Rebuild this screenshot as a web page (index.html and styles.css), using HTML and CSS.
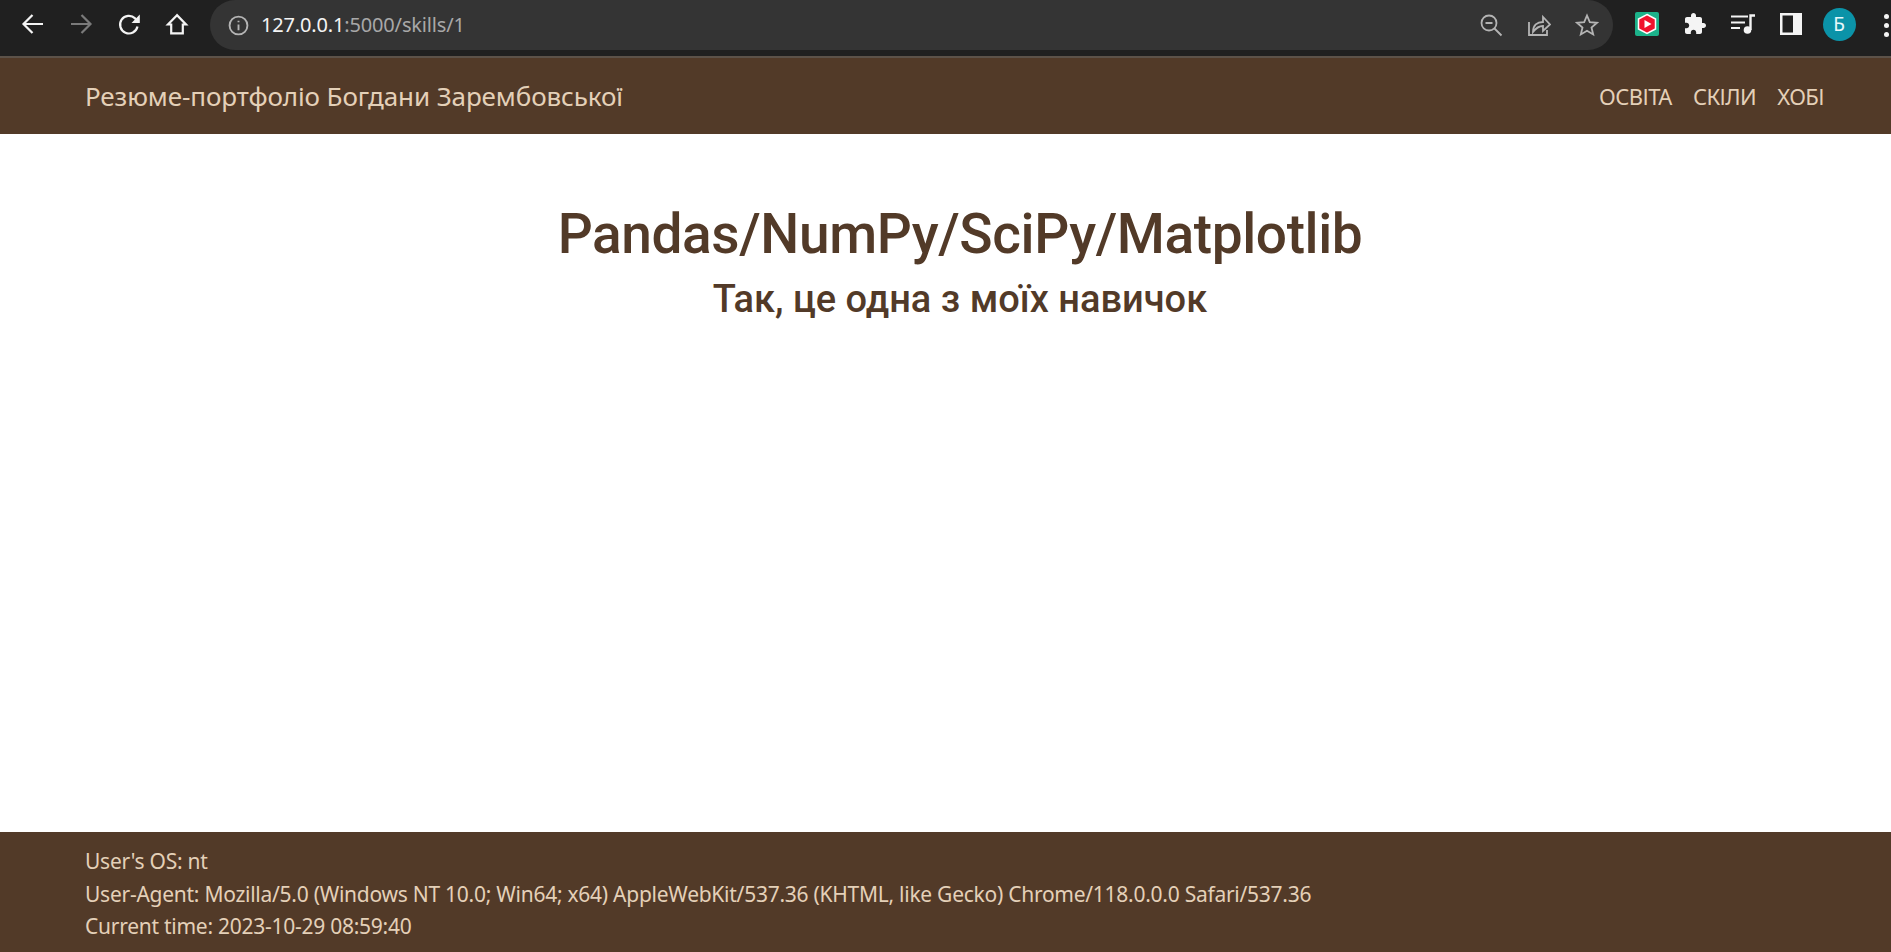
FILE: index.html
```html
<!DOCTYPE html>
<html lang="uk">
<head>
    <meta charset="UTF-8">
    <meta name="viewport" content="width=device-width, initial-scale=1.0">
    <title>Pandas/NumPy/SciPy/Matplotlib</title>
    <link rel="stylesheet" href="styles.css">
</head>
<body>
    <div class="browser-bar">
        <div class="tool-group">
            <span class="tool-btn">
                <svg viewBox="0 0 24 24" class="icon"><path d="M22 12H3M11.500 3 2.500 12l9 9" /></svg>
            </span>
            <span class="tool-btn dim">
                <svg viewBox="0 0 24 24" class="icon"><path d="M2 12H21M12.500 3l9 9-9 9" /></svg>
            </span>
            <span class="tool-btn">
                <svg viewBox="0 0 24 24" class="icon"><path d="M20.500 14.500a8.800 8.800 0 1 1-2.400-8.100L21 9.500" /><path class="solid" d="M22.800 2.500V11H14.500z" /></svg>
            </span>
            <span class="tool-btn">
                <svg viewBox="0 0 24 24" class="icon"><path d="M12 3.200 3 12.500H6.200v8.800h11.600v-8.800H21z" /></svg>
            </span>
        </div>

        <div class="omnibox">
            <svg viewBox="0 0 20 20" class="info-icon">
                <circle cx="10" cy="10" r="8.500" />
                <path d="M10 9v5.500M10 5.500v1.500" />
            </svg>
            <span class="url"><b>127.0.0.1</b>:5000/skills/1</span>
            <span class="omni-actions">
                <svg viewBox="0 0 24 24" class="omni-icon"><circle cx="10" cy="10" r="7.500" /><path d="M6.500 10h7M15.500 15.500l7 7" /></svg>
                <svg viewBox="0 0 24 24" class="omni-icon"><path d="M2 9v13h18v-5" /><path d="M6 19c0-7 4-10 10-10V4l7 7.500L16 18v-5c-4 0-7 2-10 6z" /></svg>
                <svg viewBox="0 0 24 24" class="omni-icon"><path d="M12 2.500l2.800 6.700 7.200.6-5.500 4.700 1.700 7-6.200-3.700-6.200 3.700 1.700-7L2 9.800l7.200-.6z" /></svg>
            </span>
        </div>

        <div class="tool-group ext-group">
            <span class="tool-btn">
                <svg viewBox="0 0 24 24" class="ext-icon">
                    <rect width="24" height="24" rx="2" fill="#1cb28a" />
                    <path d="M12 2.500 20.500 7v10L12 21.500 3.500 17V7z" fill="#f0122d" stroke="#fff" stroke-width="1.500" />
                    <path d="M9.500 8 16.500 12 9.500 16z" fill="#fff" />
                </svg>
            </span>
            <span class="tool-btn">
                <svg viewBox="0 0 24 24" class="ext-icon"><path fill="#f4f4f4" d="M20.500 11H19V7c0-1.100-.9-2-2-2h-4V3.500C13 2.120 11.880 1 10.500 1S8 2.120 8 3.500V5H4c-1.100 0-1.990.9-1.990 2v3.800H3.500c1.490 0 2.700 1.210 2.700 2.700s-1.210 2.700-2.700 2.700H2V20c0 1.100.9 2 2 2h3.800v-1.500c0-1.490 1.210-2.700 2.700-2.700 1.490 0 2.700 1.210 2.700 2.700V22H17c1.100 0 2-.9 2-2v-4h1.500c1.380 0 2.500-1.120 2.500-2.500S21.880 11 20.500 11z" /></svg>
            </span>
            <span class="tool-btn">
                <svg viewBox="0 0 24 24" class="ext-icon">
                    <path d="M0 4.500h17M0 10.500h14M0 16h9" stroke="#f4f4f4" stroke-width="2" />
                    <path d="M19.500 18V3.500H24" stroke="#f4f4f4" stroke-width="2.400" fill="none" />
                    <circle cx="16.500" cy="18" r="3.800" fill="#f4f4f4" />
                </svg>
            </span>
            <span class="tool-btn">
                <svg viewBox="0 0 24 24" class="ext-icon">
                    <path fill="#f4f4f4" fill-rule="evenodd" d="M1 1h22v22H1zM3.500 3.500v17H14v-17z" />
                </svg>
            </span>
            <span class="tool-btn"><span class="avatar">Б</span></span>
            <span class="menu-dots"><i></i><i></i><i></i></span>
        </div>
    </div>

    <nav class="navbar">
        <a class="brand" href="#">Резюме-портфоліо Богдани Зарембовської</a>
        <div class="nav-links">
            <a href="#">ОСВІТА</a>
            <a href="#">СКІЛИ</a>
            <a href="#">ХОБІ</a>
        </div>
    </nav>

    <main class="content">
        <h1>Pandas/NumPy/SciPy/Matplotlib</h1>
        <h2>Так, це одна з моїх навичок</h2>
    </main>

    <footer class="footer">
        <div>User's OS: nt</div>
        <div>User-Agent: Mozilla/5.0 (Windows NT 10.0; Win64; x64) AppleWebKit/537.36 (KHTML, like Gecko) Chrome/118.0.0.0 Safari/537.36</div>
        <div>Current time: 2023-10-29 08:59:40</div>
    </footer>
</body>
</html>
```

FILE: styles.css
```css
html, body {
    height: 100%;
}

body {
    margin: 0;
    display: flex;
    flex-direction: column;
    background-color: #fff;
    color: #523a28;
    font-family: "Noto Sans", "Open Sans", sans-serif;
    overflow: hidden;
}

/* browser toolbar */
.browser-bar {
    display: flex;
    align-items: flex-start;
    height: 56px;
    flex: none;
    background-color: #202020;
    border-bottom: 2px solid #5c5249;
}

.tool-group {
    display: flex;
    gap: 8px;
    padding: 4px 0 0 13px;
}

.tool-btn {
    width: 40px;
    height: 40px;
    display: flex;
    align-items: center;
    justify-content: center;
}

.icon {
    width: 24px;
    height: 24px;
    fill: none;
    stroke: #f4f4f4;
    stroke-width: 2.200;
}

.icon .solid {
    fill: #f4f4f4;
    stroke: none;
}

.dim .icon {
    stroke: #7a7a7a;
}

.omnibox {
    flex: 1;
    height: 50px;
    margin-left: 13px;
    padding: 0 14px 0 18px;
    display: flex;
    align-items: center;
    background-color: #343434;
    border-radius: 25px;
}

.info-icon {
    width: 21px;
    height: 21px;
    fill: none;
    stroke: #b4b4b4;
    stroke-width: 1.800;
    flex: none;
}

.url {
    margin: 0 0 2px 12px;
    font-size: 20px;
    letter-spacing: -0.16px;
    color: #a8a8a8;
}

.url b {
    font-weight: 400;
    color: #f4f4f4;
}

.omni-actions {
    margin-left: auto;
    display: flex;
    gap: 24px;
}

.omni-icon {
    width: 24px;
    height: 24px;
    fill: none;
    stroke: #b4b4b4;
    stroke-width: 1.800;
}

.ext-group {
    padding-left: 14px;
}

.ext-icon {
    width: 24px;
    height: 24px;
}

.avatar {
    width: 33px;
    height: 33px;
    border-radius: 50%;
    background-color: #0b93a8;
    color: #e8f8fb;
    font-size: 19px;
    display: flex;
    align-items: center;
    justify-content: center;
}

.menu-dots {
    width: 24px;
    box-sizing: border-box;
    display: flex;
    flex-direction: column;
    gap: 4px;
    padding: 10px 0 0 17px;
}

.menu-dots i {
    width: 5px;
    height: 5px;
    border-radius: 50%;
    background-color: #f4f4f4;
}

/* site navbar */
.navbar {
    height: 76px;
    flex: none;
    display: flex;
    align-items: center;
    justify-content: space-between;
    padding: 0 67px 0 85px;
    background-color: #523a28;
}

.navbar a {
    color: #e4d0b8;
    text-decoration: none;
}

.brand {
    font-size: 26px;
    letter-spacing: -0.1px;
}

.nav-links {
    display: flex;
    gap: 21px;
    font-size: 22px;
    letter-spacing: -0.55px;
}

/* page body */
.content {
    flex: 1;
    padding: 67px 0 0 29px;
    text-align: center;
    font-family: Roboto, "Noto Sans", sans-serif;
}

h1 {
    margin: 0;
    font-size: 55px;
    font-weight: 500;
    line-height: 66px;
    letter-spacing: -0.4px;
}

h2 {
    margin: 10px 0 0;
    font-size: 38px;
    font-weight: 500;
    line-height: 44px;
}

.footer {
    flex: none;
    height: 120px;
    box-sizing: border-box;
    padding: 13px 85px 0;
    background-color: #523a28;
    color: #e4d0b8;
    font-size: 21px;
    line-height: 32.500px;
    letter-spacing: -0.26px;
}
```
